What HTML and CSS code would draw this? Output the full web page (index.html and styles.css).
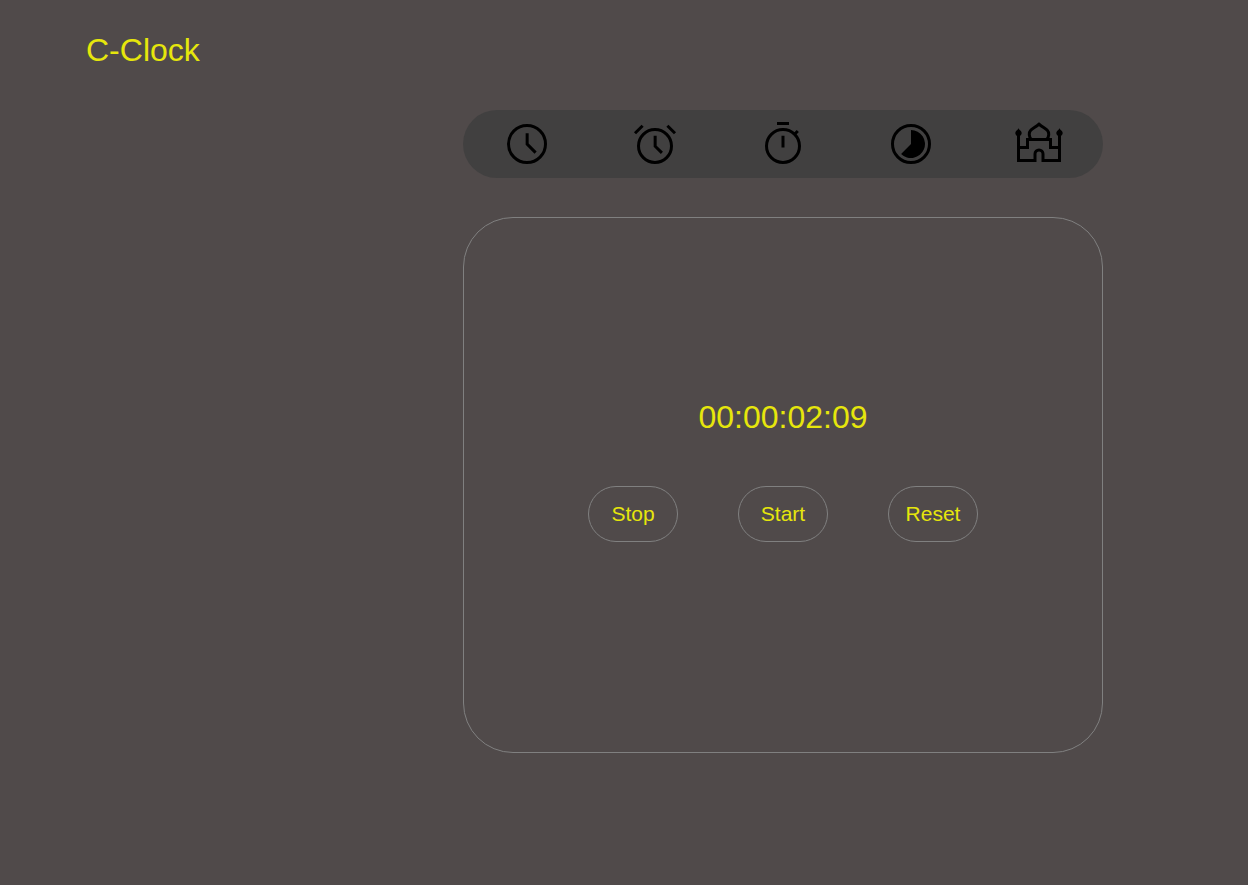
FILE: index.html
```html
<!DOCTYPE html>
<html lang="en">
<head>
  <meta charset="utf-8">
  <meta name="viewport" content="width=device-width, initial-scale=1">
  <title>C-Clock</title>
  <link rel="stylesheet" href="styles.css">
</head>
<body>
  <header class="header">
    <h1 class="title">C-Clock</h1>
  </header>
  <main class="main">
    <nav class="tabs" aria-label="Clock tools">
      <a class="tab" href="#clock" aria-label="Clock">
        <svg class="icon" viewBox="0 0 48 48" aria-hidden="true"><circle cx="24" cy="24" r="18.5"/><path d="M24.15 13.3V24.1L32.6 32.6"/></svg>
      </a>
      <a class="tab" href="#alarm" aria-label="Alarm">
        <svg class="icon" viewBox="0 0 48 48" aria-hidden="true"><circle cx="24" cy="26" r="16.5"/><path d="M24.15 15.8V26.2L30.9 32.9M4 13.2L11.6 5.8M36.4 5.8L44 13.2"/></svg>
      </a>
      <a class="tab" href="#stopwatch" aria-label="Stopwatch">
        <svg class="icon" viewBox="0 0 48 48" aria-hidden="true"><circle cx="24" cy="26" r="16.5"/><path d="M18 3.5H30M24 15.8V27.4M35.2 14.6L38.8 11"/></svg>
      </a>
      <a class="tab" href="#timer" aria-label="Timer">
        <svg class="icon" viewBox="0 0 48 48" aria-hidden="true"><circle cx="24" cy="24" r="18.5"/><path class="solid" d="M24 24V10A14 14 0 1 1 14.1 33.9Z"/></svg>
      </a>
      <a class="tab" href="#prayer" aria-label="Prayer times">
        <svg class="icon" viewBox="0 0 48 48" aria-hidden="true"><path d="M3.5 14V40.5H20V34a4 4 0 0 1 8 0V40.5H44.5V14M3.5 27.5H12.500V19.500H35.500V27.500H44.500M16.500 19.500C13.700 17 13.600 12.500 15.700 10.300C17.500 8.300 21 7 24 4.200C27 7 30.500 8.300 32.300 10.300C34.400 12.500 34.300 17 31.500 19.500"/><path class="solid" d="M3.500 8.200Q4.200 9.700 5.900 10.900Q7.200 12.600 6.300 14.600Q5.600 16.300 3.500 16.500Q1.400 16.300 .700 14.600Q-.200 12.600 1.100 10.900Q2.800 9.700 3.500 8.200ZM44.500 8.200Q45.200 9.700 46.900 10.900Q48.200 12.600 47.300 14.600Q46.600 16.300 44.500 16.500Q42.400 16.300 41.700 14.600Q40.800 12.600 42.100 10.900Q43.800 9.700 44.500 8.200Z"/></svg>
      </a>
    </nav>
    <section class="panel" aria-label="Stopwatch">
      <div class="time" role="timer">00:00:02:09</div>
      <div class="actions">
        <button class="action" type="button">Stop</button>
        <button class="action" type="button">Start</button>
        <button class="action" type="button">Reset</button>
      </div>
    </section>
  </main>
</body>
</html>
```

FILE: styles.css
```css
* {
  box-sizing: border-box;
}

body {
  margin: 0;
  background: #504a4a;
  color: #e6e60c;
  font-family: "Liberation Sans", Arial, sans-serif;
}

.header {
  padding: 32px 86px;
}

.title {
  margin: 0;
  font-size: 32px;
  font-weight: 400;
  line-height: 36px;
}

.main {
  display: flex;
  flex-direction: column;
  align-items: flex-end;
  gap: 39px;
  padding: 10px 145px 40px 20px;
}

.tabs {
  display: flex;
  width: 100%;
  max-width: 640px;
  padding: 10px 0;
  border-radius: 34px;
  background: #414040;
}

.tab {
  display: flex;
  flex: 1;
  justify-content: center;
  color: #000;
}

.icon {
  width: 48px;
  height: 48px;
  fill: none;
  stroke: currentColor;
  stroke-width: 3;
}

.solid {
  fill: currentColor;
  stroke: none;
}

.panel {
  display: flex;
  flex-direction: column;
  align-items: center;
  gap: 51px;
  width: 100%;
  max-width: 640px;
  padding: 181px 20px 210px;
  border: 1px solid #808080;
  border-radius: 50px;
}

.time {
  font-size: 32px;
  line-height: 36px;
}

.actions {
  display: flex;
  flex-wrap: wrap;
  justify-content: center;
  gap: 60px;
}

.action {
  width: 90px;
  height: 56px;
  padding: 0;
  border: 1px solid #808080;
  border-radius: 28px;
  background: transparent;
  color: inherit;
  font-family: inherit;
  font-size: 21px;
  cursor: pointer;
}
```
